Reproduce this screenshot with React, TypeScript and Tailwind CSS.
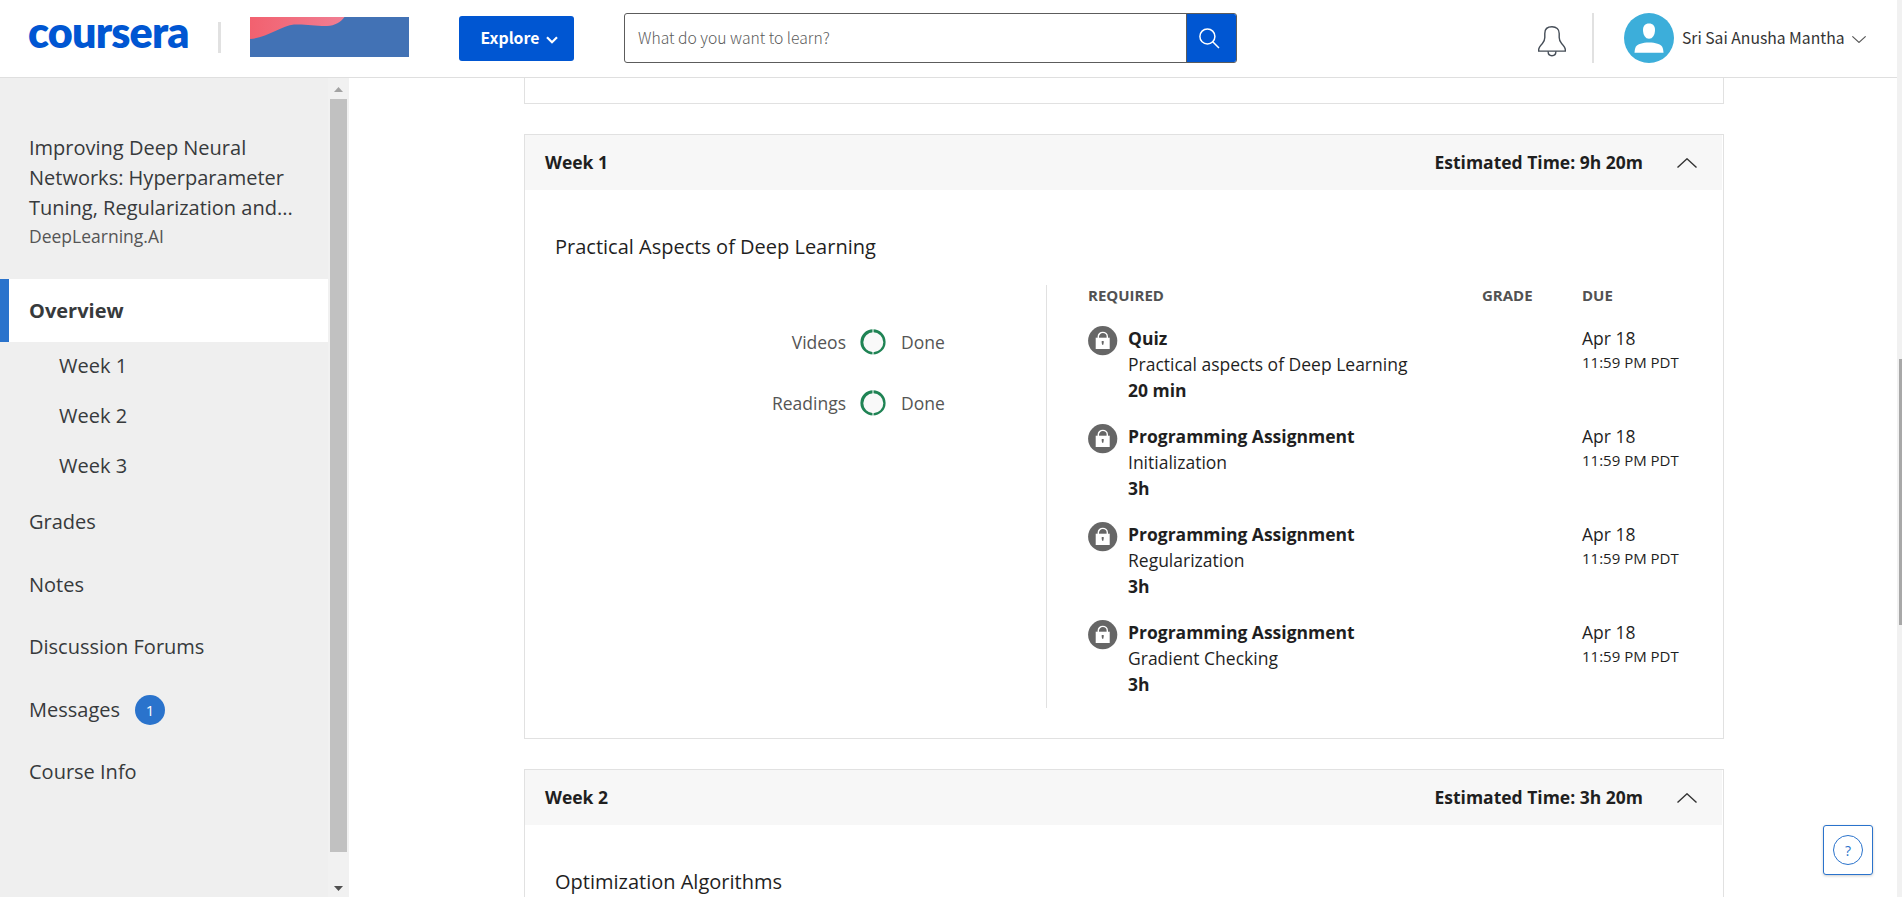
import React from "react";

const openSans = "font-['Open_Sans','Noto_Sans',sans-serif]";
const sourceSans = "font-['Noto_Sans_CJK_SC','Open_Sans',sans-serif]";

type Task = { kind: string; name: string; time: string };

const tasks: Task[] = [
  { kind: "Quiz", name: "Practical aspects of Deep Learning", time: "20 min" },
  { kind: "Programming Assignment", name: "Initialization", time: "3h" },
  { kind: "Programming Assignment", name: "Regularization", time: "3h" },
  { kind: "Programming Assignment", name: "Gradient Checking", time: "3h" },
];

function Chevron({ up = false, className }: { up?: boolean; className: string }) {
  return (
    <svg viewBox="0 0 20 10" fill="none" stroke="currentColor" className={className}>
      <path d={up ? "M0.5 9.5 10 0.8l9.5 8.7" : "M0.5 0.5 10 9.2l9.5-8.7"} />
    </svg>
  );
}

function BellIcon() {
  return (
    <svg width="28" height="31" viewBox="0 0 28 31" fill="none" stroke="#454d57" strokeWidth="1.4">
      <path d="M14 .8C9.6.8 6.8 3.2 6.8 7.4v4.2c0 2.6-.7 4-2.4 5.8-2.5 2.7-3.7 4-3.7 6.2v1.5h26.6v-1.5c0-2.2-1.2-3.5-3.7-6.2-1.7-1.8-2.4-3.2-2.4-5.8V7.4C21.2 3.2 18.4.8 14 .8Z" />
      <path d="M10.1 25.2c0 2.9 1.7 4.5 3.9 4.5s3.9-1.6 3.9-4.5" />
    </svg>
  );
}

function Avatar() {
  return (
    <svg width="50" height="50" viewBox="0 0 50 50">
      <circle cx="25" cy="25" r="25" fill="#3caeda" />
      <path d="M25 10.5c4 0 6 2.6 6 6.5 0 5-2.5 8.8-6 8.8s-6-3.8-6-8.8c0-3.9 2-6.5 6-6.5Z" fill="#fff" />
      <path d="M10.5 39.7c.3-3.2.5-4.5 1.5-6.2 1.2-1.9 6.5-3.9 13-3.9s11.8 2 13 3.9c1 1.7 1.2 3 1.5 6.2Z" fill="#fff" />
    </svg>
  );
}

function LockIcon() {
  return (
    <svg width="30" height="30" viewBox="0 0 30 30" className="mt-px shrink-0">
      <circle cx="14.7" cy="14.7" r="14.6" fill="#666" />
      <path d="M10.3 12V10.6a4.5 4.2 0 0 1 9 0V12" fill="none" stroke="#fff" strokeWidth="1.4" />
      <path d="M7.7 11.7h14V23h-14Z" fill="#fff" />
      <path d="M13.7 15h2v1.8l-.4 1.9h-1.2l-.4-1.9Z" fill="#666" />
    </svg>
  );
}

function DoneRing() {
  return (
    <svg width="26" height="26" viewBox="0 0 26 26">
      <circle cx="13" cy="13" r="11.3" fill="#f9f9f9" />
      <path
        fillRule="evenodd"
        fill="#1f8354"
        d="M13 .3a12.6 12.6 0 1 0 0 25.2 12.6 12.6 0 0 0 0-25.2Zm.3 2.9a10 10 0 1 1 0 20 10 10 0 0 1 0-20Z"
      />
      <path d="M13 0v4M13 22v4" stroke="#fff" strokeWidth="1" />
    </svg>
  );
}

function Header() {
  return (
    <header className={`flex h-[78px] shrink-0 items-start border-b border-[#dfdfdf] bg-white ${sourceSans}`}>
      <div className="ml-[28px] mt-[6px] w-[161px] whitespace-nowrap font-['Lato','Open_Sans',sans-serif] text-[43px] font-extrabold leading-[52px] tracking-[-0.8px] text-[#0056d2]">
        coursera
      </div>
      <div className="ml-[29px] mt-[22px] h-[31px] w-[3px] bg-[#e1e1e1]" />
      <svg width="159" height="40" viewBox="0 0 159 40" className="ml-[29px] mt-[17px]">
        <defs>
          <linearGradient id="wave" x1="0" x2="1" y1="0" y2="0">
            <stop offset="0" stopColor="#f2616f" />
            <stop offset="1" stopColor="#f07e93" />
          </linearGradient>
        </defs>
        <path d="M0 0h159v40H0Z" fill="#4272b5" />
        <path d="M0 0h94.500C91 5 85 8.800 77 8.900 64 9 56 7 44 7.500 32 8.500 16 21 0 22Z" fill="url(#wave)" />
      </svg>
      <button className="ml-[50px] mt-[16px] flex h-[45px] w-[115px] items-center rounded-[3px] bg-[#0056d2] pl-[21px] text-[15.8px] font-bold text-white">
        <span className="-mt-px w-[60px] whitespace-nowrap leading-[26px]">Explore</span>
        <svg width="12" height="8" viewBox="0 0 12 8" fill="none" stroke="#fff" strokeWidth="2.2" className="ml-[6px] mt-[2px]">
          <path d="m1 1.200 5 5 5-5" />
        </svg>
      </button>
      <div className="ml-[50px] mt-[13px] flex h-[50px] w-[613px] overflow-hidden rounded-[3px] border border-[#5c5c5c]">
        <div className="flex-1 pl-[13px] text-[15.7px] font-light leading-[48px] text-[#5c5c5c]">What do you want to learn?</div>
        <div className="w-[50px] border-l border-[#5c5c5c] bg-[#0056d2] pl-[12px] pt-[14px]">
          <svg width="21" height="21" viewBox="0 0 21 21" fill="none" stroke="#fff" strokeWidth="1.5">
            <circle cx="8.4" cy="8.4" r="7.5" />
            <path d="m13.500 13.500 6.500 6.500" />
          </svg>
        </div>
      </div>
      <div className="ml-[301px] mt-[26px]">
        <BellIcon />
      </div>
      <div className="ml-[26px] mt-[13px] h-[50px] w-[2px] bg-[#e1e1e1]" />
      <div className="ml-[30px] mt-[13px]">
        <Avatar />
      </div>
      <div className="ml-[8px] mt-[13px] w-[170px] shrink-0 whitespace-nowrap text-[15.7px] leading-[49px] text-[#333]">Sri Sai Anusha Mantha</div>
      <Chevron className="mt-[36px] h-[7px] w-[14px] shrink-0 stroke-[1.6] text-[#555]" />
    </header>
  );
}

function NavItem({ label, badge }: { label: string; badge?: string }) {
  return (
    <div className="flex h-[62.5px] items-center pl-[29px]">
      <span>{label}</span>
      {badge && (
        <span className="ml-[15px] flex size-[30px] items-center justify-center rounded-full bg-[#2a73cc] text-[15px] text-white">
          {badge}
        </span>
      )}
    </div>
  );
}

function Sidebar() {
  return (
    <aside className="flex w-[349px] shrink-0 bg-[#efefef] text-[20px] text-[#373a3c]">
      <nav className="w-[328px]">
        <div className="whitespace-nowrap pl-[29px] pt-[55px] leading-[30px]">
          <div>Improving Deep Neural</div>
          <div>Networks: Hyperparameter</div>
          <div>Tuning, Regularization and...</div>
          <div className="text-[17.5px] leading-[26px] text-[#555]">DeepLearning.AI</div>
        </div>
        <div className="mt-[30px] flex h-[63px] items-center border-l-[9px] border-[#2a73cc] bg-white pl-[20px] font-bold">
          Overview
        </div>
        <div className="-mt-px">
          {["Week 1", "Week 2", "Week 3"].map((week) => (
            <div key={week} className="pl-[59px] leading-[50px]">
              {week}
            </div>
          ))}
          <NavItem label="Grades" />
          <NavItem label="Notes" />
          <NavItem label="Discussion Forums" />
          <NavItem label="Messages" badge="1" />
          <NavItem label="Course Info" />
        </div>
      </nav>
      <div className="flex w-[21px] flex-col items-center bg-[#f1f1f1]">
        <svg width="9" height="5" viewBox="0 0 9 5" className="mt-[9px]">
          <path d="M4.500 0 9 5H0Z" fill="#a3a3a3" />
        </svg>
        <div className="mt-[7px] h-[753px] w-[17px] bg-[#c1c1c1]" />
        <svg width="9" height="5" viewBox="0 0 9 5" className="mt-[34px]">
          <path d="M4.500 5 9 0H0Z" fill="#505050" />
        </svg>
      </div>
    </aside>
  );
}

function WeekHeader({ title, time }: { title: string; time: string }) {
  return (
    <div className="mr-px flex h-[55px] items-center bg-[#f7f7f7] pl-[20px] text-[17.5px] font-bold text-[#1f1f1f]">
      <span>{title}</span>
      <span className="ml-auto">{time}</span>
      <Chevron up className="ml-[34px] mr-[25px] h-[10px] w-[20px] stroke-[1.4] text-[#333]" />
    </div>
  );
}

function Progress({ label }: { label: string }) {
  return (
    <div className="flex h-[61px] items-center text-[17.5px] leading-[26px] text-[#555]">
      <span className="w-[321px] text-right">{label}</span>
      <span className="ml-[14px]">
        <DoneRing />
      </span>
      <span className="ml-[15px]">Done</span>
    </div>
  );
}

function TaskRow({ task }: { task: Task }) {
  return (
    <div className="flex h-[98px] text-[17.5px] leading-[26px] text-[#1f1f1f]">
      <LockIcon />
      <div className="ml-[10px] w-[454px]">
        <div className="font-bold">{task.kind}</div>
        <div>{task.name}</div>
        <div className="font-bold">{task.time}</div>
      </div>
      <div>
        <div>Apr 18</div>
        <div className="text-[15px] leading-[22px]">11:59 PM PDT</div>
      </div>
    </div>
  );
}

function HelpButton() {
  return (
    <button className="absolute bottom-[22px] right-[24px] flex size-[50px] items-center justify-center rounded-[3px] border border-[#2a73cc] bg-white shadow-[0_1px_3px_rgba(0,0,0,0.2)]">
      <span className="flex size-[30px] items-center justify-center rounded-full border border-[#2a73cc] text-[14px] text-[#2a73cc]">
        ?
      </span>
    </button>
  );
}

export default function App() {
  return (
    <div className={`flex h-[897px] w-[1902px] overflow-hidden bg-white ${openSans}`}>
      <div className="relative flex w-[1897px] flex-col">
        <Header />
        <div className="flex min-h-0 flex-1">
          <Sidebar />
          <main className="flex min-h-0 flex-1 flex-col gap-[30px] overflow-hidden pl-[175px]">
            <section className="h-[26px] w-[1200px] shrink-0 border border-t-0 border-[#e1e1e1]" />
            <section className="h-[605px] w-[1200px] shrink-0 border border-[#e1e1e1]">
              <WeekHeader title="Week 1" time="Estimated Time: 9h 20m" />
              <h2 className="ml-[30px] mt-[42px] text-[20px] leading-[30px] text-[#1f1f1f]">Practical Aspects of Deep Learning</h2>
              <div className="mt-[23px] flex h-[423px]">
                <div className="w-[521px] pt-[26px]">
                  <Progress label="Videos" />
                  <Progress label="Readings" />
                </div>
                <div className="border-l border-[#e1e1e1] pl-[41px]">
                  <div className="flex text-[15px] font-bold leading-[20px] text-[#525252]">
                    <span className="w-[394px]">REQUIRED</span>
                    <span className="w-[100px]">GRADE</span>
                    <span>DUE</span>
                  </div>
                  <div className="pt-[20px]">
                    {tasks.map((task, i) => (
                      <TaskRow key={i} task={task} />
                    ))}
                  </div>
                </div>
              </div>
            </section>
            <section className="h-[605px] w-[1200px] shrink-0 border border-[#e1e1e1]">
              <WeekHeader title="Week 2" time="Estimated Time: 3h 20m" />
              <h2 className="ml-[30px] mt-[42px] text-[20px] leading-[30px] text-[#1f1f1f]">Optimization Algorithms</h2>
            </section>
          </main>
        </div>
        <HelpButton />
      </div>
      <div className="flex w-[5px] flex-col items-end bg-[#f1f1f1]">
        <div className="mt-[359px] h-[266px] w-[3px] bg-[#a8a8a8]" />
      </div>
    </div>
  );
}
